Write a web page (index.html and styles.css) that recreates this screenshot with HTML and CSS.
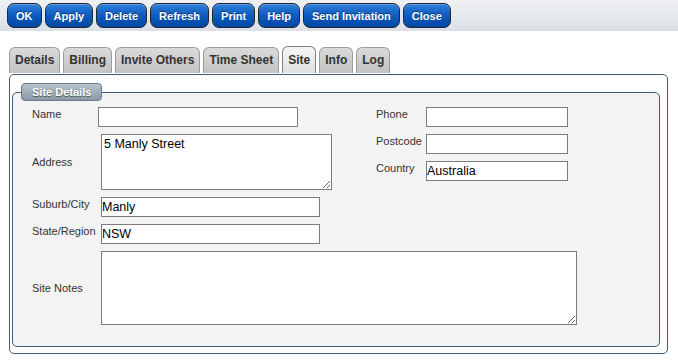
FILE: index.html
```html
<!DOCTYPE html>
<html lang="en">
<head>
  <meta charset="UTF-8" />
  <title>Site | Job Details</title>
  <meta name="viewport" content="width=device-width, initial-scale=1.0" />
  <link rel="stylesheet" href="styles.css">
</head>
<body>
  <div class="toolbar">
    <button class="btn">OK</button>
    <button class="btn">Apply</button>
    <button class="btn">Delete</button>
    <button class="btn">Refresh</button>
    <button class="btn">Print</button>
    <button class="btn">Help</button>
    <button class="btn">Send Invitation</button>
    <button class="btn">Close</button>
  </div>

  <div class="tabs">
    <a class="tab">Details</a>
    <a class="tab">Billing</a>
    <a class="tab">Invite Others</a>
    <a class="tab">Time Sheet</a>
    <a class="tab active">Site</a>
    <a class="tab">Info</a>
    <a class="tab">Log</a>
  </div>

  <div class="panel">
    <fieldset class="group">
      <legend>Site Details</legend>
      <div class="site-form">
        <label class="lbl" for="name">Name</label>
        <input class="field name" type="text" id="name" />
        <label class="lbl" for="phone">Phone</label>
        <input class="field side" type="text" id="phone" />

        <label class="lbl mid address-lbl" for="address">Address</label>
        <textarea class="field address" id="address">5 Manly Street</textarea>
        <label class="lbl" for="postcode">Postcode</label>
        <input class="field side" type="text" id="postcode" />

        <label class="lbl country-lbl" for="country">Country</label>
        <input class="field side country" type="text" id="country" value="Australia" />

        <label class="lbl row-4" for="suburb">Suburb/City</label>
        <input class="field wide row-4" type="text" id="suburb" value="Manly" />

        <label class="lbl row-5" for="state">State/Region</label>
        <input class="field wide row-5" type="text" id="state" value="NSW" />

        <label class="lbl mid row-6" for="notes">Site Notes</label>
        <textarea class="field notes row-6" id="notes"></textarea>
      </div>
    </fieldset>
  </div>
</body>
</html>
```

FILE: styles.css
```css
body {
  font-family: 'Liberation Sans', Arial, sans-serif;
  background-color: #ffffff;
  color: #333333;
  margin: 0;
  padding: 0;
}
.toolbar {
  display: flex;
  gap: 3px;
  height: 31px;
  box-sizing: border-box;
  padding: 3px 7px 0;
  background: linear-gradient(#eef0f3, #dce0e6);
}
.btn {
  height: 25px;
  padding: 0 8px;
  border: 1px solid #1e2833;
  border-radius: 7px;
  background: linear-gradient(#2f80db, #0d5bbf 50%, #0047a2);
  box-shadow: inset 0 1px 0 rgba(255, 255, 255, 0.25);
  color: white;
  font-family: inherit;
  font-size: 11px;
  font-weight: bold;
  text-shadow: 0 -1px 0 rgba(0, 0, 0, 0.45);
  cursor: pointer;
}
.btn:hover {
  background: linear-gradient(#3f8ee6, #0047a2);
}
.tabs {
  display: flex;
  align-items: flex-end;
  gap: 3px;
  padding: 15px 0 0 9px;
}
.tab {
  height: 26px;
  box-sizing: border-box;
  padding: 0 5px;
  border: 1px solid #9c9c9c;
  border-bottom: none;
  border-radius: 6px 6px 0 0;
  background: linear-gradient(#dadada, #c2c2c2);
  color: #333333;
  font-size: 12px;
  font-weight: bold;
  line-height: 25px;
  cursor: pointer;
}
.tab.active {
  height: 27px;
  line-height: 26px;
  border-color: #808080;
  background: linear-gradient(#f6f6f6, #e0e0e0);
}
.panel {
  margin: 1px 10px 0 9px;
  padding: 0 0 6px;
  border: 1px solid #3f5b79;
  border-radius: 5px;
  background-color: #ffffff;
}
.group {
  margin: 8px 7px 0 2px;
  padding: 6px 8px 21px;
  border: 1px solid #3f5b79;
  border-radius: 5px;
  background-color: #f3f3f3;
}
.group legend {
  height: 18px;
  box-sizing: border-box;
  padding: 0 10px;
  border: 1px solid #6b7888;
  border-radius: 4px;
  background: linear-gradient(#b9c2cc, #8c98a6);
  color: white;
  font-size: 11px;
  font-weight: bold;
  line-height: 16px;
  text-shadow: 0 1px 1px rgba(0, 0, 0, 0.5);
}
.site-form {
  display: grid;
  grid-template-columns: 69px 275px 50px 1fr;
  grid-template-rows: 20px 20px 29px 20px 20px 74px;
  row-gap: 7px;
  padding-left: 11px;
}
.lbl {
  align-self: start;
  padding-top: 1px;
  font-size: 11px;
  line-height: 13px;
  color: #333333;
}
.lbl.mid {
  align-self: center;
  padding-top: 0;
}
.address-lbl {
  grid-row: 2 / span 2;
}
.country-lbl {
  grid-column: 3;
  grid-row: 3;
}
.row-4 {
  grid-row: 4;
}
.row-5 {
  grid-row: 5;
}
.row-6 {
  grid-row: 6;
}
.lbl.row-4,
.lbl.row-5,
.lbl.row-6 {
  grid-column: 1;
}
.field {
  box-sizing: border-box;
  height: 20px;
  margin: 0;
  padding: 0;
  border: 1px solid #7c7c7c;
  border-radius: 0;
  background-color: white;
  color: black;
  font-family: inherit;
  font-size: 12.5px;
}
.name {
  width: 200px;
  margin-left: -3px;
}
.side {
  width: 142px;
}
.country {
  grid-column: 4;
  grid-row: 3;
  align-self: start;
}
.wide {
  grid-column: 2;
  width: 219px;
}
textarea.field {
  padding: 2px;
}
.address {
  grid-row: 2 / span 2;
  width: 231px;
  height: 56px;
}
.notes {
  grid-column: 2 / span 3;
  width: 476px;
  height: 74px;
}
```
